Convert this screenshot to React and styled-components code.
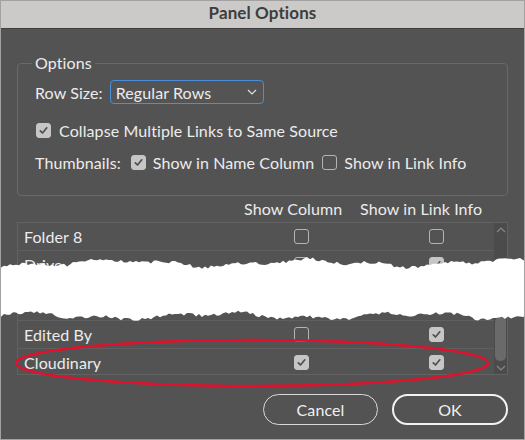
import React from 'react';
import styled, { createGlobalStyle } from 'styled-components';

const GlobalStyle = createGlobalStyle`
  html, body {
    margin: 0;
    padding: 0;
    background: #535353;
  }
  body {
    font-family: Lato, "Open Sans", sans-serif;
  }
`;

const Window = styled.div`
  position: relative;
  width: 525px;
  height: 440px;
  box-sizing: border-box;
  border: 1px solid #a2a2a2;
  background: #535353;
  color: #ececec;
  font-size: 16px;
  letter-spacing: 0.1px;
  display: flex;
  flex-direction: column;
  overflow: hidden;
`;

const TitleBar = styled.div`
  height: 28px;
  flex: 0 0 28px;
  box-sizing: border-box;
  padding-bottom: 5px;
  background: #cbcac8;
  border-bottom: 1px solid #3e3e3e;
  color: #3d3d3d;
  font-weight: 700;
  font-size: 17px;
  display: flex;
  align-items: center;
  justify-content: center;
`;

const Body = styled.div`
  flex: 1;
  display: flex;
  flex-direction: column;
  padding: 0 16px;
`;

const Group = styled.fieldset`
  margin: 24px 0 0 0;
  padding: 0 0 23px 14px;
  border: 1px solid #696969;
  border-radius: 4px;
  display: flex;
  flex-direction: column;
`;

const Legend = styled.legend`
  padding: 0 3px;
  line-height: 20px;
`;

const Line = styled.div`
  display: flex;
  align-items: center;
  height: ${p => p.$h || 20}px;
  margin-top: ${p => p.$top || 0}px;
  padding-left: 3px;
  gap: ${p => p.$gap || 7}px;
`;

const Label = styled.span`
  white-space: nowrap;
  margin-right: ${p => p.$mr || 0}px;
`;

const Select = styled.div`
  width: 154px;
  height: 24px;
  box-sizing: border-box;
  border: 1px solid #4b8fdc;
  border-radius: 4px;
  background: #545454;
  display: flex;
  align-items: center;
  justify-content: space-between;
  padding: 0 6px 0 5px;
  margin-left: 1px;
`;

const Box = styled.span`
  width: 15px;
  height: 15px;
  flex: 0 0 15px;
  box-sizing: border-box;
  border-radius: 3px;
  border: 1px solid ${p => (p.$on ? '#c6c6c6' : '#b4b4b4')};
  background: ${p => (p.$on ? '#c6c6c6' : 'transparent')};
  display: flex;
  align-items: center;
  justify-content: center;
  margin-left: ${p => p.$ml || 0}px;
`;

const Check = ({ on, ml }) => (
  <Box $on={on} $ml={ml}>
    {on && (
      <svg width="11" height="11" viewBox="0 0 11 11">
        <path d="M2.3 5.8 L4.5 8 L8.8 2.8" fill="none" stroke="#4e4e4e" strokeWidth="1.7" strokeLinecap="round" strokeLinejoin="round" />
      </svg>
    )}
  </Box>
);

const cols = '226px 116px 134px';

const HeadRow = styled.div`
  display: grid;
  grid-template-columns: ${cols};
  padding-left: 1px;
  margin-top: 2px;
  height: 20px;
  align-items: center;
  white-space: nowrap;
`;

const Table = styled.div`
  margin-top: 4px;
  border: 1px solid #626262;
  display: flex;
  height: 151px;
`;

const Rows = styled.div`
  flex: 1;
  display: flex;
  flex-direction: column;
`;

const Row = styled.div`
  display: grid;
  grid-template-columns: ${cols};
  align-items: center;
  height: ${p => p.$h || 27}px;
  flex: 0 0 ${p => p.$h || 27}px;
  border-bottom: ${p => (p.$last ? 'none' : '1px solid #5f5f5f')};
`;

const Name = styled.span`
  padding-left: 6px;
`;

const Scroll = styled.div`
  width: 14px;
  background: #4b4b4b;
  display: flex;
  flex-direction: column;
  align-items: center;
  justify-content: space-between;
  padding: 4px 0 3px;
`;

const Thumb = styled.div`
  width: 11px;
  height: 44px;
  border-radius: 5px;
  background: #6a6a6a;
  margin-top: auto;
  margin-bottom: 4px;
`;

const Buttons = styled.div`
  display: flex;
  justify-content: flex-end;
  gap: 14px;
  margin-top: 19px;
`;

const Button = styled.div`
  width: ${p => p.$w}px;
  height: 31px;
  box-sizing: border-box;
  border-radius: 16px;
  border: ${p => (p.$primary ? '2.5px solid #f2f2f2' : '1.5px solid #d8d8d8')};
  display: flex;
  align-items: center;
  justify-content: center;
  font-size: 16px;
  color: #f0f0f0;
`;

const Overlay = styled.svg`
  position: absolute;
  left: 0;
  top: 0;
  pointer-events: none;
`;

const Caret = ({ up }) => (
  <svg width="10" height="6" viewBox="0 0 10 6">
    <path d={up ? 'M1 5 L5 1 L9 5' : 'M1 1 L5 5 L9 1'} fill="none" stroke="#8a8a8a" strokeWidth="1.1" />
  </svg>
);

const rnd = (i, s) => {
  const x = Math.sin(i * 12.9898 + s * 78.233) * 43758.5453;
  return x - Math.floor(x);
};

const edge = (base, seed) => {
  const pts = [];
  for (let x = -2; x <= 528; x += 3) {
    const y =
      base +
      2.6 * Math.sin(x / 31 + seed) +
      1.8 * Math.sin(x / 11 + seed * 2) +
      (rnd(x, seed) - 0.5) * 3.4;
    pts.push([x, y.toFixed(1)]);
  }
  return pts;
};

const tearPath = () => {
  const top = edge(263, 1);
  const bot = edge(316, 4).reverse();
  return 'M' + top.concat(bot).map(p => p.join(' ')).join(' L') + ' Z';
};

const rows = [
  { name: 'Folder 8', a: false, b: false },
  { name: 'Drive', a: false, b: true },
  { name: 'Modified', a: false, b: false, h: 41 },
  { name: 'Edited By', a: false, b: true },
  { name: 'Cloudinary', a: true, b: true, last: true },
];

export default function App() {
  return (
    <>
      <GlobalStyle />
      <Window>
        <TitleBar>Panel Options</TitleBar>
        <Body>
          <Group>
            <Legend>Options</Legend>
            <Line $h={24} $top={7} $gap={6}>
              <Label>Row Size:</Label>
              <Select>
                <span>Regular Rows</span>
                <svg width="10" height="6" viewBox="0 0 10 6">
                  <path d="M1 1 L5 5 L9 1" fill="none" stroke="#e0e0e0" strokeWidth="1.2" />
                </svg>
              </Select>
            </Line>
            <Line $top={16} $gap={8}>
              <Check on ml={1} />
              <Label>Collapse Multiple Links to Same Source</Label>
            </Line>
            <Line $top={12} $gap={7}>
              <Label $mr={3}>Thumbnails:</Label>
              <Check on />
              <Label $mr={1}>Show in Name Column</Label>
              <Check />
              <Label>Show in Link Info</Label>
            </Line>
          </Group>
          <HeadRow>
            <span />
            <span>Show Column</span>
            <span>Show in Link Info</span>
          </HeadRow>
          <Table>
            <Rows>
              {rows.map(r => (
                <Row key={r.name} $h={r.h} $last={r.last}>
                  <Name>{r.name}</Name>
                  <Check on={r.a} ml={50} />
                  <Check on={r.b} ml={69} />
                </Row>
              ))}
            </Rows>
            <Scroll>
              <Caret up />
              <Thumb />
              <Caret />
            </Scroll>
          </Table>
          <Buttons>
            <Button $w={115}>Cancel</Button>
            <Button $w={116} $primary>OK</Button>
          </Buttons>
        </Body>
        <Overlay width="523" height="438" viewBox="1 1 523 438">
          <path d={tearPath()} fill="#ffffff" />
          <ellipse cx="252" cy="363" rx="236" ry="23" fill="none" stroke="#e1102c" strokeWidth="2.6" />
        </Overlay>
      </Window>
    </>
  );
}
